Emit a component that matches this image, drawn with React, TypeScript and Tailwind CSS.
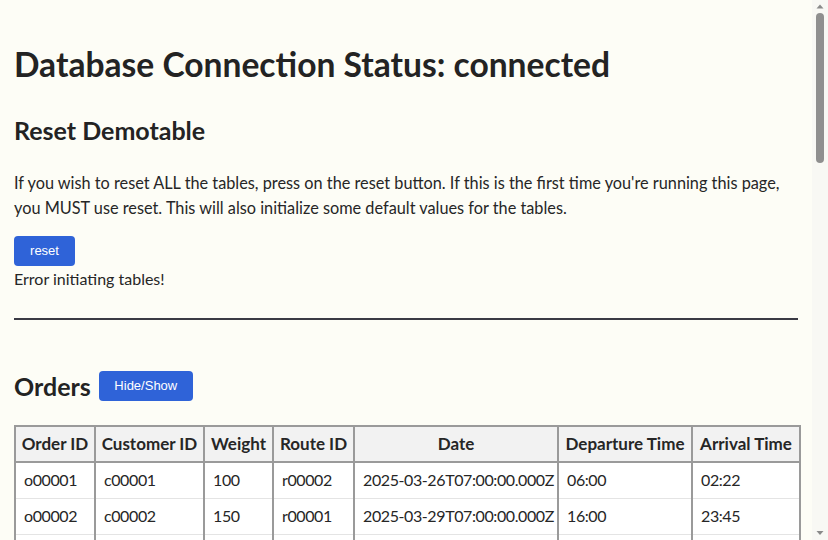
import React from 'react';

const orders = [
  { id: 'o00001', customer: 'c00001', weight: 100, route: 'r00002', date: '2025-03-26T07:00:00.000Z', dep: '06:00', arr: '02:22' },
  { id: 'o00002', customer: 'c00002', weight: 150, route: 'r00001', date: '2025-03-29T07:00:00.000Z', dep: '16:00', arr: '23:45' },
  { id: 'o00003', customer: 'c00003', weight: 200, route: 'r00003', date: '2025-04-02T07:00:00.000Z', dep: '09:30', arr: '14:10' },
];

const headers = [
  { label: 'Order ID', w: 'w-[80px]' },
  { label: 'Customer ID', w: 'w-[109px]' },
  { label: 'Weight', w: 'w-[69px]' },
  { label: 'Route ID', w: 'w-[81px]' },
  { label: 'Date', w: 'w-[204px]' },
  { label: 'Departure Time', w: 'w-[134px]' },
  { label: 'Arrival Time', w: 'w-[108px]' },
];

function Scrollbar() {
  return (
    <div className="flex w-[16px] shrink-0 flex-col items-center bg-[#f8f8f4]">
      <svg width="16" height="13" viewBox="0 0 16 13" className="shrink-0">
        <path d="M4.5 8.5 L8 4.5 L11.5 8.5 Z" fill="#8a8a8a" />
      </svg>
      <div className="h-[150px] w-[8px] rounded-full bg-[#8f8f8f]" />
      <div className="flex-1" />
      <svg width="16" height="13" viewBox="0 0 16 13" className="shrink-0">
        <path d="M4.5 4 L11.5 4 L8 8 Z" fill="#8a8a8a" />
      </svg>
    </div>
  );
}

export default function App() {
  return (
    <div className="flex h-screen overflow-hidden bg-[#fdfdf6]">
      <div
        className="min-w-0 flex-1 overflow-hidden px-[14px] pt-[42px] text-[#262626]"
        style={{ fontFamily: 'Lato, "Noto Sans", sans-serif' }}
      >
        <h1 className="text-[33.6px] font-bold leading-[44px] text-[#232323]">Database Connection Status: connected</h1>

        <h2 className="mt-[28px] text-[25px] font-bold leading-[32px] text-[#232323]">Reset Demotable</h2>

        <p className="mt-[24px] text-[16.3px] leading-[25px]">
          If you wish to reset ALL the tables, press on the reset button. If this is the first time you're running this page,
          you MUST use reset. This will also initialize some default values for the tables.
        </p>

        <button
          className="mt-[16px] h-[30px] w-[61px] rounded-[4px] bg-[#2f63d8] text-[13px] text-white"
          style={{ fontFamily: '"Liberation Sans", Arial, sans-serif' }}
        >
          reset
        </button>
        <div className="text-[16px] leading-[25px]">Error initiating tables!</div>

        <hr className="mt-[27px] border-t-2 border-[#3a3a44]" />

        <div className="mt-[50px] flex items-center gap-[8px]">
          <h2 className="text-[25px] font-bold leading-[32px] text-[#232323]">Orders</h2>
          <button
            className="h-[30px] w-[94px] rounded-[4px] bg-[#2f63d8] text-[13px] text-white"
            style={{ fontFamily: '"Liberation Sans", Arial, sans-serif' }}
          >
            Hide/Show
          </button>
        </div>

        <table className="mt-[23px] w-[785px] table-fixed border-collapse">
          <thead>
            <tr className="bg-[#f2f2f2]">
              {headers.map(h => (
                <th
                  key={h.label}
                  className={`${h.w} h-[36px] whitespace-nowrap border-2 border-[#9a9a9a] px-1 text-center text-[17px] font-bold`}
                >
                  {h.label}
                </th>
              ))}
            </tr>
          </thead>
          <tbody>
            {orders.map(o => (
              <tr key={o.id} className="bg-white">
                {[o.id, o.customer, o.weight, o.route, o.date, o.dep, o.arr].map((v, i) => (
                  <td
                    key={i}
                    className="h-[36px] whitespace-nowrap border-x-2 border-y border-x-[#9a9a9a] border-y-[#e4e4e4] px-2 text-left text-[16px] tracking-[-0.4px]"
                  >
                    {v}
                  </td>
                ))}
              </tr>
            ))}
          </tbody>
        </table>
      </div>
      <Scrollbar />
    </div>
  );
}
